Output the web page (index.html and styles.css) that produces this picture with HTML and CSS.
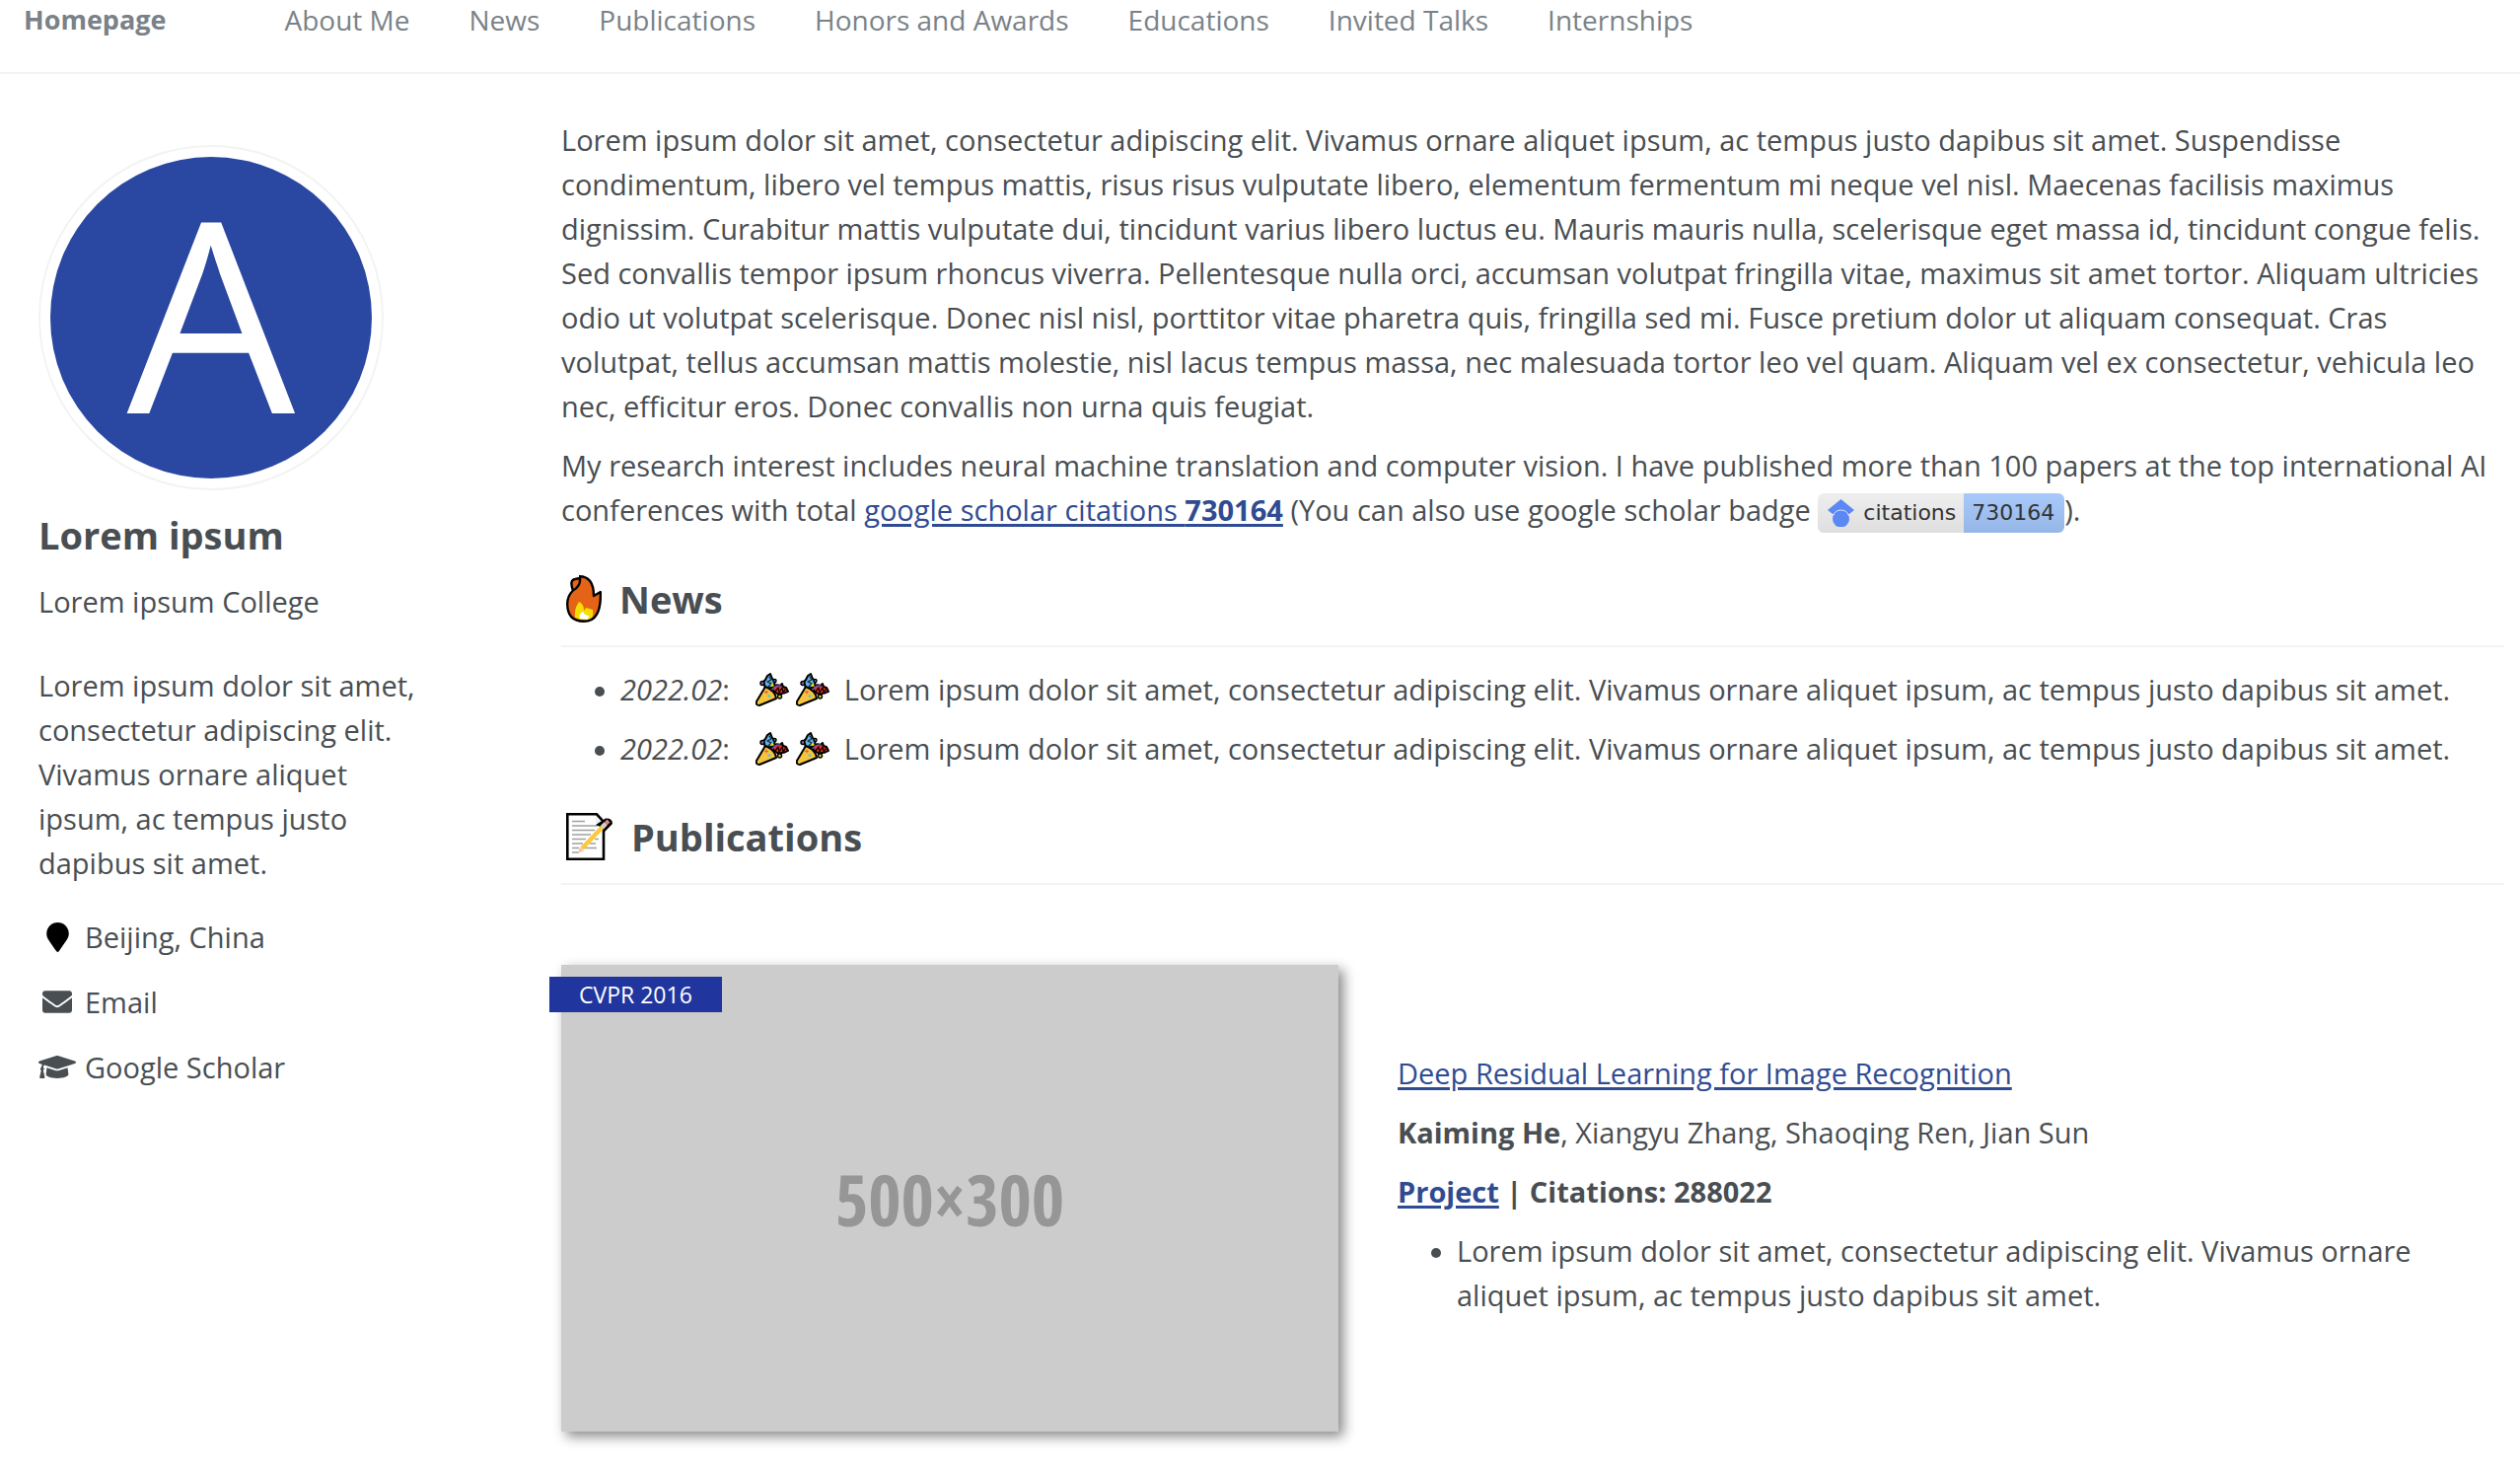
FILE: index.html
```html
<!DOCTYPE html>
<html lang="en">
<head>
<meta charset="utf-8">
<title>Homepage</title>
<link rel="stylesheet" href="styles.css">
</head>
<body>
<svg class="sprite" aria-hidden="true">
  <symbol id="party" viewBox="0 0 34 34">
    <g stroke-linejoin="round" stroke-linecap="round">
      <path d="M10 16L9 12L6 11L10 7L12 3L15 1L17 6L20 8L19 12L16 15Z" fill="#61b2e4" stroke="#000" stroke-width="2"/>
      <circle cx="7" cy="10.500" r="2" fill="#8967aa" stroke="#000" stroke-width="1.5"/>
      <circle cx="19.500" cy="8" r="1.500" fill="#61b2e4" stroke="#000" stroke-width="1.5"/>
      <path d="M14 4l2 3-4 2 4 2-3 3" fill="none" stroke="#123" stroke-width="1.2"/>
      <path d="M17 14Q21 11 25 13L27 11L28 14L31 15L33 19Q28 22 22 21L18 18Z" fill="#ea3b27" stroke="#000" stroke-width="2"/>
      <path d="M20 19l3-4 1 5 3-5 1 5 2-3" fill="none" stroke="#200" stroke-width="1.4"/>
      <path d="M17 18Q18 13 25 13" fill="none" stroke="#6a55b0" stroke-width="1.5"/>
      <circle cx="17" cy="12.500" r="1.600" fill="#f1e000"/>
      <circle cx="24.500" cy="24" r="2" fill="#f1e000" stroke="#000" stroke-width="1.5"/>
      <path d="M10 14Q20 18 21 26L4 33Q0 33 1 29Z" fill="#f5c63c" stroke="#000" stroke-width="2"/>
      <path d="M11 18v3M9.500 19.500h3" stroke="#ea5a47" stroke-width="1.2"/>
      <circle cx="14" cy="23.500" r="1.5" fill="#61c2e4"/>
    </g>
  </symbol>
</svg>

<header class="masthead">
  <nav class="nav">
    <a class="nav-title" href="#">Homepage</a>
    <a href="#about">About Me</a>
    <a href="#news">News</a>
    <a href="#publications">Publications</a>
    <a href="#honors">Honors and Awards</a>
    <a href="#educations">Educations</a>
    <a href="#talks">Invited Talks</a>
    <a href="#internships">Internships</a>
  </nav>
</header>

<div class="page">
  <aside class="sidebar">
    <div class="avatar"><span>A</span></div>
    <h1 class="name">Lorem ipsum</h1>
    <p class="college">Lorem ipsum College</p>
    <p class="bio">Lorem ipsum dolor sit amet, consectetur adipiscing elit. Vivamus ornare aliquet ipsum, ac tempus justo dapibus sit amet.</p>
    <ul class="contacts">
      <li>
        <svg class="icon icon-pin" viewBox="0 0 384 512"><path d="M172 501C27 291 0 269 0 192a192 192 0 0 1 384 0c0 77-27 99-172 309-10 14-30 14-40 0z"/></svg>
        Beijing, China
      </li>
      <li>
        <svg class="icon icon-mail" viewBox="0 64 512 384"><path d="M502.300 190.800c3.900-3.100 9.700-.200 9.700 4.700V400c0 26.500-21.500 48-48 48H48c-26.500 0-48-21.500-48-48V195.600c0-5 5.700-7.800 9.700-4.700 22.400 17.400 52.100 39.500 154.100 113.600 21.100 15.400 56.700 47.800 92.200 47.600 35.700.3 72-32.800 92.300-47.600 102-74.100 131.600-96.300 154-113.700zM256 320c23.200.4 56.600-29.200 73.400-41.400 132.700-96.300 142.800-104.700 173.400-128.700 5.800-4.500 9.200-11.500 9.200-18.900v-19c0-26.500-21.500-48-48-48H48c-26.500 0-48 21.500-48 48v19c0 7.400 3.400 14.300 9.200 18.900 30.600 23.900 40.700 32.400 173.400 128.700 16.800 12.200 50.200 41.800 73.400 41.400z"/></svg>
        <a href="#email">Email</a>
      </li>
      <li>
        <svg class="icon icon-cap" viewBox="0 64 640 384"><path d="M622.300 153.200L343.400 67.500c-15.200-4.700-31.600-4.700-46.800 0L17.700 153.200c-23.600 7.300-23.600 38.300 0 45.600l48.600 14.900c-10.700 13.200-17.200 29.300-17.800 46.900C38.500 266.100 32 276.400 32 288c0 10.800 5.700 19.900 14 25.700L20.300 428.500C18.100 438.500 25.700 448 35.900 448h56.200c10.200 0 17.800-9.500 15.600-19.500L82 313.700c8.300-5.800 14-14.900 14-25.700 0-11.300-6.200-21-15.300-26.600.8-15.200 8.500-28.500 20.800-37L296.600 284.500c9.100 2.800 26.800 7 46.800 0l279-85.700c23.500-7.300 23.500-38.300-.1-45.600zM352.800 315.100c-28.500 8.800-52.200 3-65.600 0l-145-44.500L128 384c0 35.300 86 64 192 64s192-28.700 192-64l-14.200-113.400z"/></svg>
        <a href="#scholar">Google Scholar</a>
      </li>
    </ul>
  </aside>

  <main class="content">
    <section id="about">
      <p>Lorem ipsum dolor sit amet, consectetur adipiscing elit. Vivamus ornare aliquet ipsum, ac tempus justo dapibus sit amet. Suspendisse condimentum, libero vel tempus mattis, risus risus vulputate libero, elementum fermentum mi neque vel nisl. Maecenas facilisis maximus dignissim. Curabitur mattis vulputate dui, tincidunt varius libero luctus eu. Mauris mauris nulla, scelerisque eget massa id, tincidunt congue felis. Sed convallis tempor ipsum rhoncus viverra. Pellentesque nulla orci, accumsan volutpat fringilla vitae, maximus sit amet tortor. Aliquam ultricies odio ut volutpat scelerisque. Donec nisl nisl, porttitor vitae pharetra quis, fringilla sed mi. Fusce pretium dolor ut aliquam consequat. Cras volutpat, tellus accumsan mattis molestie, nisl lacus tempus massa, nec malesuada tortor leo vel quam. Aliquam vel ex consectetur, vehicula leo nec, efficitur eros. Donec convallis non urna quis feugiat.</p>
      <p>My research interest includes neural machine translation and computer vision. I have published more than 100 papers at the top international AI conferences with total <a class="link" href="#scholar">google scholar citations <strong>730164</strong></a> (You can also use google scholar badge <a class="badge" href="#scholar"><span class="badge-label"><svg viewBox="0 0 27 28"><path d="M13.500 0L27 11l-5 4H5l-5-4z"/><circle cx="13.500" cy="20" r="8.500"/><path class="badge-arc" d="M5.500 16.500a8.600 8.600 0 0 1 16 0"/></svg>citations</span><span class="badge-value">730164</span></a>).</p>
    </section>

    <section id="news">
      <h2>
        <svg class="fire" viewBox="0 0 36 48"><path d="M13 2Q28 3 28 21L35 17Q36 47 18 47Q1 47 1 29Q1 21 6 16Q3 6 9 4L14 3Q16 10 10 15L6 16Q3 6 9 4L14 3Z" fill="#e56317"/><path d="M9 43Q8 34 13 27Q18 29 18 36L20 33L27 35Q28 42 25 45Q17 47 9 43Z" fill="#f5df00"/><path d="M14 44Q12 40 17 37Q19 41 23 41L22 45Z" fill="#fff"/><path d="M13 1.200Q28 1 28 21L34.800 17Q36 46.800 18 46.800Q1.200 46.800 1.200 29Q1.200 21 7 15.500Q3 5 9 4L14 3Q15 11 7 15.500" fill="none" stroke="#000" stroke-width="2.400" stroke-linejoin="round"/></svg>
        News
      </h2>
      <ul class="list">
        <li><em>2022.02</em>: <svg class="party party-first"><use href="#party"/></svg><svg class="party"><use href="#party"/></svg> Lorem ipsum dolor sit amet, consectetur adipiscing elit. Vivamus ornare aliquet ipsum, ac tempus justo dapibus sit amet.</li>
        <li><em>2022.02</em>: <svg class="party party-first"><use href="#party"/></svg><svg class="party"><use href="#party"/></svg> Lorem ipsum dolor sit amet, consectetur adipiscing elit. Vivamus ornare aliquet ipsum, ac tempus justo dapibus sit amet.</li>
      </ul>
    </section>

    <section id="publications">
      <h2>
        <svg class="memo" viewBox="0 0 48 48"><path d="M1.300 1.300H31L38 9V46.700H1.300z" fill="#fff" stroke="#000" stroke-width="2.600"/><path d="M30 3v7h6" fill="#eee"/><g stroke="#a0a0a0" stroke-width="1.300"><path d="M6 8.500h13M6 13h26M6 17.500h23M6 22h19M6 26.500h14M29 26.500h4M6 31h11M24 31h6M6 35.500h7M18 35.500h13M6 40h7"/></g><path d="M30 12L40 5.500Q47 5 47 11L37 21V15z" fill="#000"/><path d="M16 36L39 12" stroke="#fcc93c" stroke-width="4.500"/><path d="M36.500 14.500L40.500 10.500" stroke="#d0cfce" stroke-width="4.500"/><path d="M40.500 10.500L43 8" stroke="#e6857c" stroke-width="4"/><path d="M14 34.500L18 38.500L12 40.500z" fill="#f5c5a5"/></svg>
        Publications
      </h2>
      <article class="paper">
        <div class="paper-figure">
          <div class="placeholder">500×300</div>
          <div class="venue">CVPR 2016</div>
        </div>
        <div class="paper-text">
          <p><a class="link" href="#paper">Deep Residual Learning for Image Recognition</a></p>
          <p><strong>Kaiming He</strong>, Xiangyu Zhang, Shaoqing Ren, Jian Sun</p>
          <p><strong><a class="link" href="#project">Project</a> | Citations: 288022</strong></p>
          <ul class="list">
            <li>Lorem ipsum dolor sit amet, consectetur adipiscing elit. Vivamus ornare aliquet ipsum, ac tempus justo dapibus sit amet.</li>
          </ul>
        </div>
      </article>
    </section>
  </main>
</div>
</body>
</html>
```
FILE: styles.css
```css
* { box-sizing: border-box; }

body {
  margin: 0;
  background: #fff;
  color: #494e52;
  font: 29px/45px "Open Sans", "Noto Sans", sans-serif;
}

h1, h2, p, ul { margin: 0; padding: 0; }
a { color: inherit; text-decoration: none; }
strong { font-weight: 700; }
.sprite { position: absolute; width: 0; height: 0; }

/* Top navigation */
.masthead { padding: 0 24px 33px; border-bottom: 2px solid #f2f3f3; }
.nav { display: flex; gap: 60px; font-size: 28px; line-height: 40px; color: #7a8288; white-space: nowrap; }
.nav-title { margin-right: 60px; font-weight: 700; font-size: 27px; }

/* Two-column layout */
.page {
  display: grid;
  grid-template-columns: 400px minmax(0, 1fr);
  column-gap: 130px;
  padding: 44px 16px 24px 39px;
}

/* Author profile */
.avatar {
  width: 350px;
  height: 350px;
  margin-top: 28px;
  padding: 10px;
  border: 2px solid #f2f3f3;
  border-radius: 50%;
}
.avatar span {
  display: block;
  height: 326px;
  border-radius: 50%;
  background: #2a48a2;
  color: #fff;
  font-size: 270px;
  line-height: 310px;
  text-align: center;
}
.name { margin-top: 20px; font-size: 38px; line-height: 50px; }
.college { margin-top: 20px; }
.bio { margin-top: 40px; }
.contacts { margin-top: 30px; list-style: none; display: grid; gap: 21px; }
.contacts li { display: grid; grid-template-columns: 38px 1fr; column-gap: 9px; align-items: center; }
.icon { justify-self: center; fill: #494e52; }
.icon-pin { width: 23px; height: 30px; fill: #000; }
.icon-mail { width: 30px; height: 23px; }
.icon-cap { width: 38px; height: 23px; }

/* Main column */
.content p { margin-bottom: 15px; }
.link { color: #2f4b92; text-decoration: underline 3px; text-underline-offset: 3px; }

h2 {
  display: flex;
  align-items: center;
  margin-top: 37px;
  padding: 0 0 17px 5px;
  border-bottom: 2px solid #f2f3f3;
  font-size: 38px;
  line-height: 60px;
}
.fire { width: 36px; height: 48px; margin-right: 18px; }
.memo { width: 48px; height: 48px; margin-right: 18px; }

.list { list-style: none; padding-left: 60px; }
#news .list { margin-top: 20px; }
.list li { position: relative; }
.list li + li { margin-top: 15px; }
.list li::before {
  content: "";
  position: absolute;
  left: -26px;
  top: 20px;
  width: 10px;
  height: 10px;
  border-radius: 50%;
  background: #494e52;
}
.party { width: 34px; height: 34px; margin-right: 7px; vertical-align: -6px; }
.party-first { margin-left: 19px; }

.badge {
  display: inline-flex;
  vertical-align: middle;
  border-radius: 6px;
  overflow: hidden;
  color: #333;
  font: 22px/40px "DejaVu Sans", sans-serif;
}
.badge-label { display: flex; align-items: center; gap: 9px; padding: 0 8px 0 10px; background: linear-gradient(#eeeeee, #dfdfdf); }
.badge-label svg { width: 27px; height: 28px; fill: #5c88f5; }
.badge-label .badge-arc { fill: none; stroke: #dbe4f8; }
.badge-value { padding: 0 10px 0 8px; background: linear-gradient(#a8cafa, #95b6e6); }

/* Publication card */
.paper { display: flex; align-items: center; gap: 60px; margin-top: 81px; }
.paper-figure { position: relative; flex: 0 0 40%; }
.placeholder {
  display: flex;
  align-items: center;
  justify-content: center;
  aspect-ratio: 5 / 3;
  background: #ccc;
  box-shadow: 5px 5px 12px #888;
  color: #969696;
  font: 72px/80px "Open Sans Condensed", "DejaVu Sans Condensed", sans-serif;
}
.venue {
  position: absolute;
  top: 12px;
  left: -12px;
  padding: 0 30px;
  background: #20369e;
  color: #fff;
  font-size: 23px;
  line-height: 36px;
}
.paper-text { flex: 1; }
.paper-text .list { margin-bottom: 30px; }
```
